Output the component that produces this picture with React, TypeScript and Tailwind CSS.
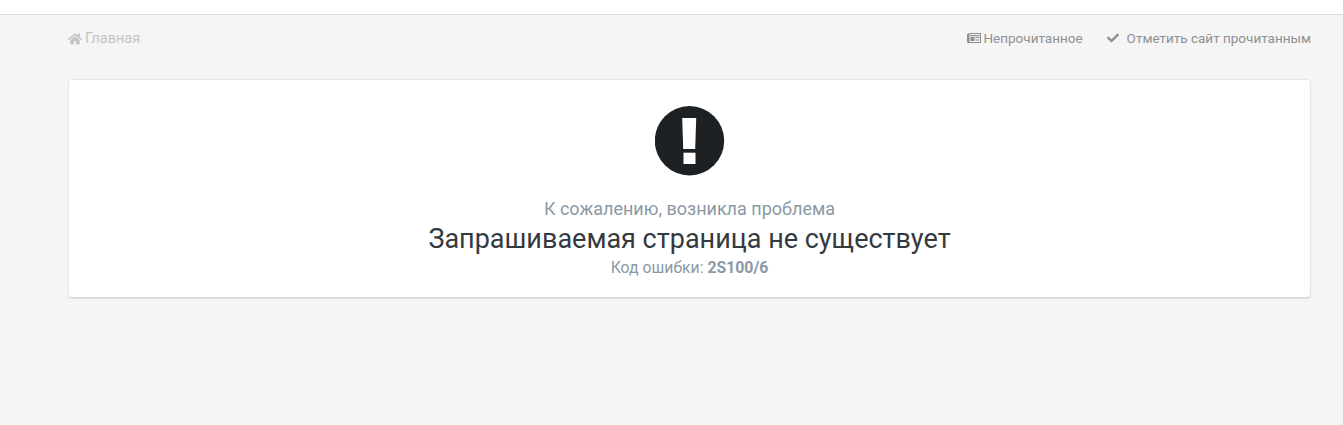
import { FaHome, FaCheck } from 'react-icons/fa';

export default function App() {
  return (
    <div className="min-h-[425px] bg-[#f5f5f5] font-['Roboto',sans-serif] overflow-hidden">
      <div className="h-[15px] bg-white border-b border-[#dcdcdc]" />

      <div className="mx-[32px] pl-[36px] flex justify-between items-center h-[46px]">
        <a className="flex items-center text-[14.5px] leading-[20px] pt-[1px] text-[#c4c4c4]">
          <FaHome className="w-[14px] h-[14px] mr-[3px]" />
          Главная
        </a>
        <div className="flex items-center text-[#909090] text-[13.5px] leading-[20px]">
          <a className="flex items-center">
            {/* newspaper-o */}
            <svg width="14" height="10" viewBox="0 0 14 10" className="mr-[2px] shrink-0">
              <path d="M0 1H1.5V0H14V10H1.5A1.5 1.5 0 0 1 0 8.5ZM2.5 1V9H13V1Z" fill="#8f8f8f" />
              <rect x="3" y="2" width="9.5" height="1.2" fill="#8f8f8f" />
              <rect x="3.5" y="4" width="4" height="4" fill="#8f8f8f" />
              <rect x="8.5" y="4" width="4" height="1" fill="#8f8f8f" />
              <rect x="8.5" y="6.5" width="4" height="1" fill="#8f8f8f" />
            </svg>
            Непрочитанное
          </a>
          <a className="flex items-center ml-[24px]">
            <FaCheck className="w-[12px] h-[12px] mr-[8px]" />
            Отметить сайт прочитанным
          </a>
        </div>
      </div>

      <div className="mt-[18px] ml-[68px] mr-[32px] h-[219px] bg-white rounded-[4px] border border-[#e6e6e6] border-b-[#d8d8d8] shadow-[0_1px_1px_rgba(0,0,0,0.08)] flex flex-col items-center pt-[26px]">
        <svg width="70" height="70" viewBox="0 0 70 70" className="shrink-0">
          <circle cx="34.5" cy="34.8" r="34.7" fill="#1d2124" />
          <path d="M27.2 12H41.2L40.2 43H28.2Z" fill="#fff" />
          <rect x="28.5" y="46.7" width="12" height="11.3" fill="#fff" />
        </svg>
        <p className="mt-[21px] text-[18px] leading-[24px] text-[#8c98a4]">К сожалению, возникла проблема</p>
        <h1 className="mt-[1px] text-[27px] leading-[34px] text-[#343a40]">Запрашиваемая страница не существует</h1>
        <p className="mt-[1px] text-[15.8px] leading-[22px] text-[#8c98a4]">
          Код ошибки: <strong className="font-bold">2S100/6</strong>
        </p>
      </div>
    </div>
  );
}
